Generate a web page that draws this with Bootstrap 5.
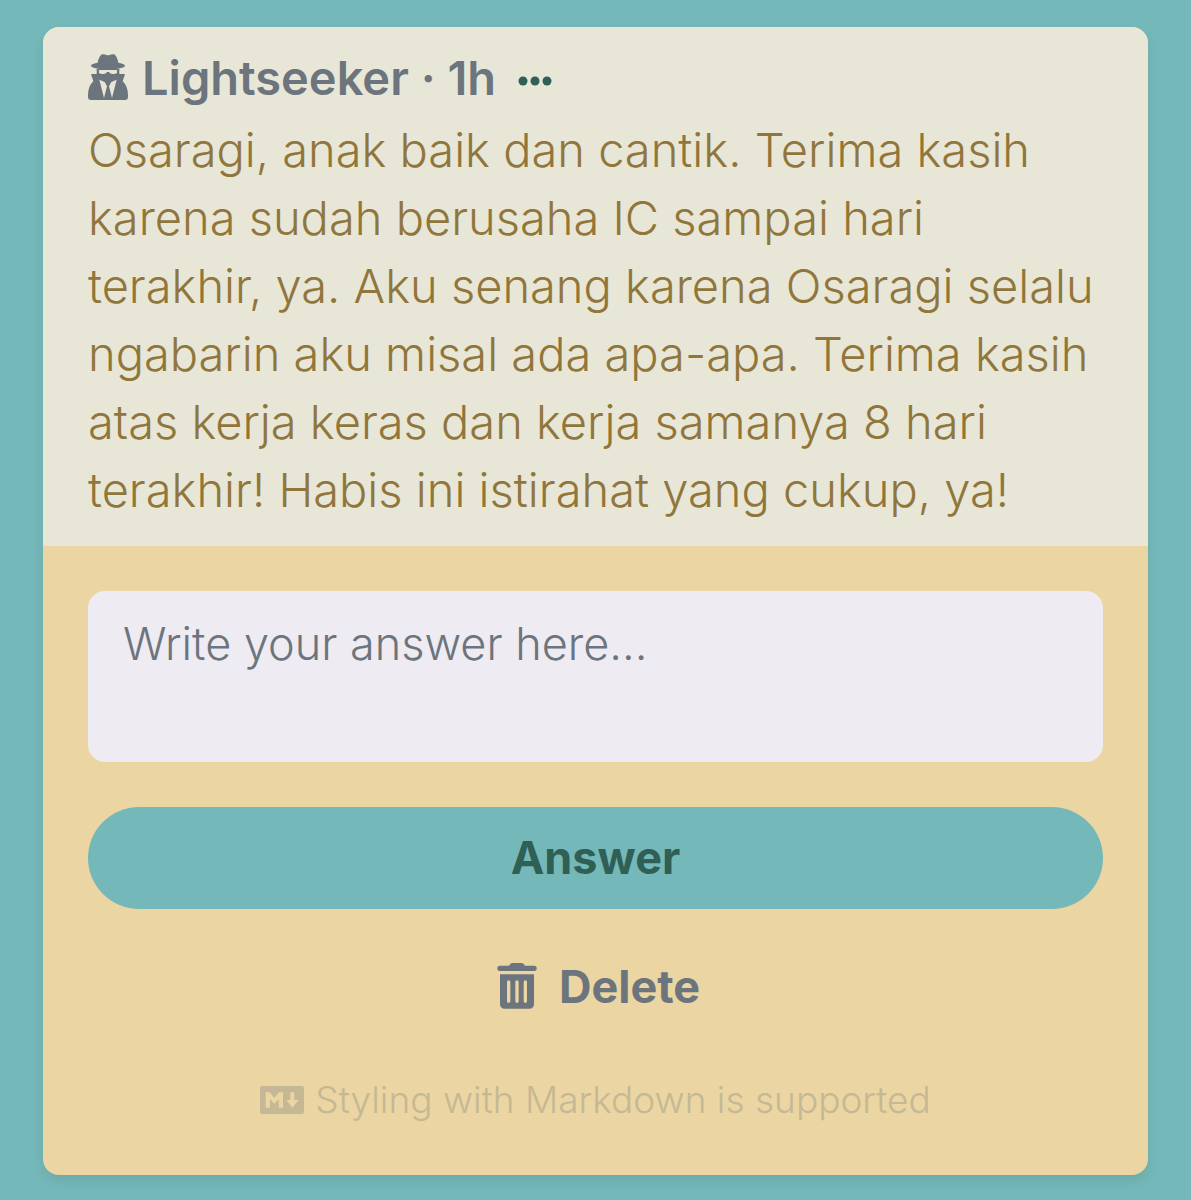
<!DOCTYPE html>
<html lang="id">
<head>
<meta charset="utf-8">
<meta name="viewport" content="width=device-width, initial-scale=1">
<title>Lightseeker</title>
<link href="https://cdn.jsdelivr.net/npm/bootstrap@5.3.0/dist/css/bootstrap.min.css" rel="stylesheet">
<style>
body { background: #75b8b9; font-family: Inter, "Open Sans", sans-serif; font-size: 47px; font-weight: 300; line-height: 68px; }
.page-pad { padding: 27px 43px 25px; }
.ask-card { border-radius: 16px; background: #ebd5a2; box-shadow: 0 6px 12px rgba(0,0,0,.08); overflow: hidden; }
.ask-head { background: #e8e7d7; color: #91763c; padding: 17px 45px 22px; }
.ask-meta { color: #6c757d; font-weight: 600; gap: 14px; margin-bottom: 4px; }
.icon-tall { width: 40px; height: 46px; flex: none; margin-bottom: 3px; }
.more-btn { color: #2f5f55; line-height: 0; margin-left: 8px; margin-top: 5px; }
.ask-body { padding: 45px; }
.answer-box, .answer-box:focus { background: #eeebf3; border: 0; border-radius: 17px; color: #6c757d; font-size: 45px; font-weight: 300; line-height: 68px; height: 171px; padding: 19px 35px; resize: none; }
.answer-box::placeholder { color: #6c757d; }
.wide-btn { font-size: 45px; font-weight: 700; line-height: 68px; padding: 17px 34px; border: 0; border-radius: 51px; }
.answer-btn, .answer-btn:hover { background: #75b8b9; color: #2f5f55; margin-top: 45px; }
.delete-btn { color: #6c757d; margin-top: 27px; gap: 22px; padding-left: 40px; }
.md-note { color: #c5b894; font-size: 37px; line-height: 54px; margin-top: 35px; margin-bottom: 3px; gap: 11px; }
</style>
</head>
<body>
<main class="page-pad">
  <article class="ask-card">
    <header class="ask-head">
      <div class="ask-meta d-flex align-items-center">
        <svg class="icon-tall" viewBox="0 0 120 138" fill="currentColor" aria-hidden="true">
          <path d="M9 35C9 30 20 28 29 26C31 15 36 2 44 1C51 0 55 4 60 4C66 4 69 0 77 1C84 2 89 15 91 26C100 28 111 30 111 35C111 41 88 46 60 46C32 46 9 41 9 35Z"/>
          <path fill-rule="evenodd" d="M26 44H94V60H111L104 82C114 91 120 105 120 124V129Q120 138 111 138H9Q0 138 0 129V124C0 105 6 91 16 82L9 60H26ZM33 48V57Q38 61 46 60Q54 60 57 54H63Q66 60 74 60Q82 61 87 57V48ZM34 77L48 132L57 97L50 84ZM86 77L72 132L63 97L70 84Z"/>
        </svg>
        <span>Lightseeker · 1h</span>
        <button class="more-btn btn p-0 border-0" type="button" aria-label="More">
          <svg width="34" height="10" viewBox="0 0 34 10" fill="currentColor"><circle cx="5" cy="5" r="4.500"/><circle cx="17" cy="5" r="4.500"/><circle cx="29" cy="5" r="4.500"/></svg>
        </button>
      </div>
      <p class="mb-0">Osaragi, anak baik dan cantik. Terima kasih karena sudah berusaha IC sampai hari<br>terakhir, ya. Aku senang karena Osaragi selalu<br>ngabarin aku misal ada apa-apa. Terima kasih atas kerja keras dan kerja samanya 8 hari<br>terakhir! Habis ini istirahat yang cukup, ya!</p>
    </header>
    <form class="ask-body">
      <textarea class="answer-box form-control" aria-label="Answer" placeholder="Write your answer here..."></textarea>
      <button class="wide-btn answer-btn btn w-100" type="button">Answer</button>
      <button class="wide-btn delete-btn btn w-100 d-flex align-items-center justify-content-center" type="button">
        <svg class="icon-tall" viewBox="0 0 120 138" fill="currentColor" aria-hidden="true">
          <path d="M8 8H36Q40 0 46 0H74Q80 0 84 8H112Q119 8 119 16T112 24H8Q1 24 1 16T8 8Z"/>
          <path fill-rule="evenodd" d="M9 34H111V122Q111 137 96 137H24Q9 137 9 122ZM30 57V115Q30 120 35 120T40 115V57Q40 52 35 52T30 57ZM55 57V115Q55 120 60 120T65 115V57Q65 52 60 52T55 57ZM80 57V115Q80 120 85 120T90 115V57Q90 52 85 52T80 57Z"/>
        </svg>
        <span>Delete</span>
      </button>
      <div class="md-note d-flex align-items-center justify-content-center">
        <svg width="44" height="28" viewBox="0 0 132 84" fill="currentColor" aria-hidden="true"><path fill-rule="evenodd" d="M8 0H124Q132 0 132 8V76Q132 84 124 84H8Q0 84 0 76V8Q0 0 8 0ZM17 19V65H30V39L43 54L56 39V65H69V19H57L43 36L29 19ZM91 19V42H79L97 65L116 42H103V19Z"/></svg>
        <span>Styling with Markdown is supported</span>
      </div>
    </form>
  </article>
</main>
<script src="https://cdn.jsdelivr.net/npm/bootstrap@5.3.0/dist/js/bootstrap.bundle.min.js"></script>
</body>
</html>
